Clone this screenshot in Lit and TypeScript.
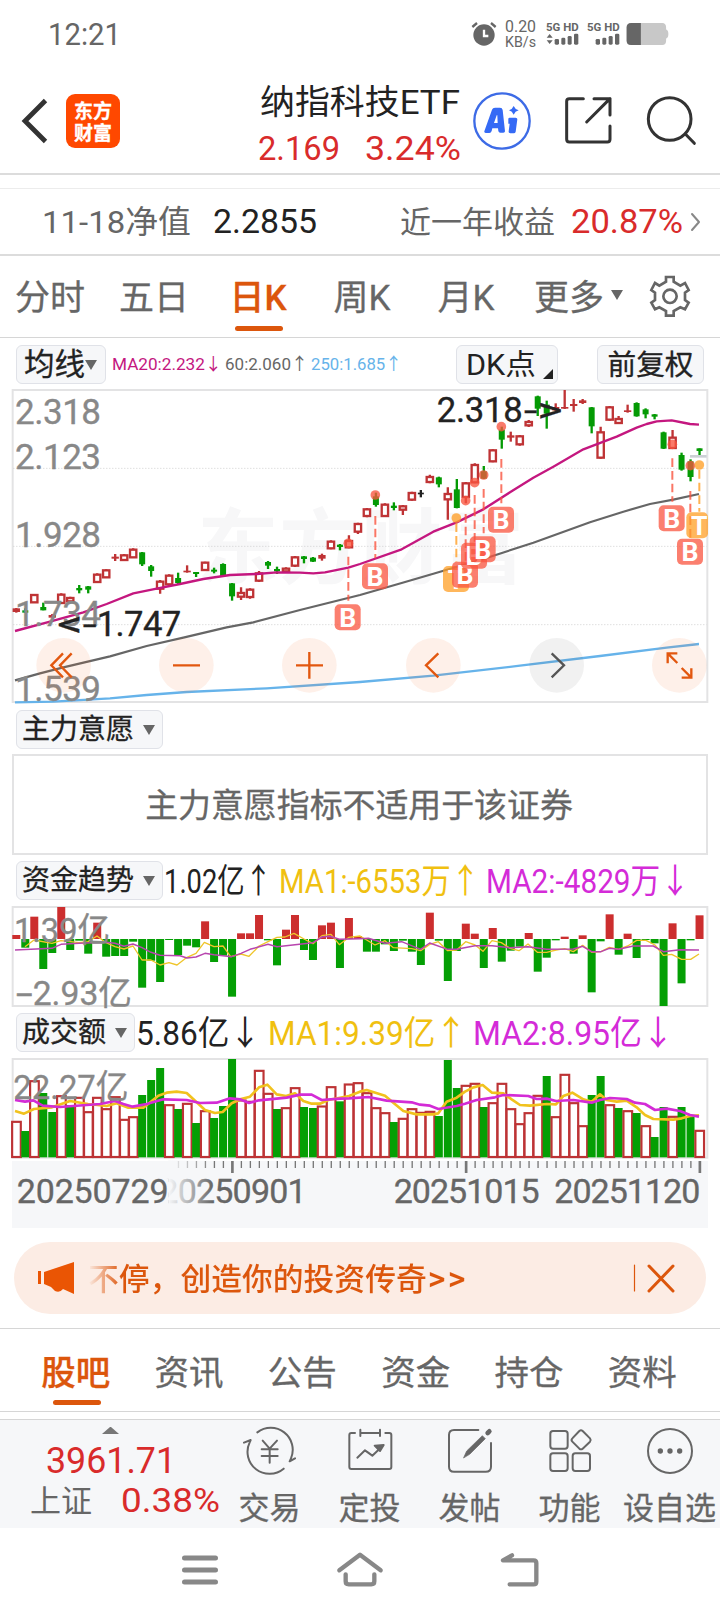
import { LitElement, html, svg, css } from "lit";
import { customElement } from "lit/decorators.js";

/** Text whose box is exactly its cap height, stretched to a given advance width. */
const fit = (text: string, width: number, size: number, cls = "") => {
  const h = Math.round(size * 0.71 * 10) / 10;
  return html`<svg class="fit ${cls}" width=${width} height=${h} viewBox="0 0 ${width} ${h}">
    <text x="0" y=${h} font-size=${size} textLength=${width} lengthAdjust="spacingAndGlyphs">${text}</text>
  </svg>`;
};

// Chart space uses three units per pixel; day i sits at X(i).
const X = (i: number) => 48.9 + 26.97 * i;

// kind, high, open/close top, open/close bottom, low
type Candle = [string, number, number, number, number];
const CANDLES: Candle[] = [
  ["r", 684, 686, 695, 698], ["g", 685, 692, 697, 699], ["r", 643, 644, 668, 668], ["g", 668, 682, 690, 691],
  ["r", 702, 706, 712, 714], ["r", 640, 643, 670, 671], ["r", 650, 653, 665, 668], ["g", 615, 625, 630, 640],
  ["g", 618, 620, 628, 640], ["r", 580, 583, 607, 608], ["r", 568, 570, 593, 594], ["r", 522, 531, 535, 543],
  ["r", 522, 525, 541, 543], ["r", 505, 508, 533, 534], ["g", 516, 518, 552, 558], ["g", 555, 560, 572, 590],
  ["r", 600, 604, 627, 641], ["r", 583, 586, 614, 620], ["g", 578, 595, 608, 612], ["r", 556, 573, 576, 578],
  ["g", 576, 577, 581, 591], ["r", 545, 547, 571, 572], ["g", 563, 570, 574, 580], ["g", 550, 553, 587, 588],
  ["g", 609, 611, 648, 662], ["r", 622, 638, 651, 660], ["r", 625, 628, 652, 656], ["r", 573, 579, 603, 606],
  ["g", 543, 547, 556, 567], ["g", 560, 568, 573, 582], ["r", 562, 565, 575, 577], ["r", 528, 531, 558, 561],
  ["g", 528, 530, 536, 550], ["g", 531, 534, 544, 546], ["r", 521, 526, 535, 542], ["r", 481, 484, 506, 508],
  ["g", 492, 495, 500, 511], ["r", 466, 482, 503, 505], ["r", 428, 431, 456, 462], ["r", 384, 387, 409, 412],
  ["g", 338, 350, 374, 380], ["r", 370, 373, 409, 410], ["g", 367, 378, 383, 391], ["r", 375, 378, 390, 405],
  ["r", 335, 338, 360, 362], ["k", 330, 339, 342, 352], ["r", 284, 290, 307, 310], ["g", 290, 293, 312, 322],
  ["r", 322, 341, 359, 419], ["g", 297, 329, 383, 385], ["r", 306, 309, 352, 370], ["r", 250, 254, 308, 310],
  ["g", 258, 275, 295, 297], ["r", 208, 210, 245, 247], ["g", 140, 150, 178, 206], ["r", 155, 167, 172, 185],
  ["r", 165, 168, 194, 197], ["r", 120, 125, 137, 141], ["g", 47, 50, 85, 108], ["g", 62, 75, 100, 146],
  ["r", 70, 82, 90, 92], ["r", 30, 82, 84, 87], ["r", 57, 73, 77, 95], ["r", 57, 62, 68, 72],
  ["g", 81, 83, 138, 160], ["r", 140, 156, 234, 236], ["r", 78, 81, 120, 122], ["r", 108, 116, 130, 132],
  ["r", 74, 92, 95, 98], ["g", 67, 70, 108, 110], ["g", 85, 89, 102, 115], ["g", 102, 104, 109, 118],
  ["g", 155, 158, 205, 207], ["r", 150, 172, 205, 207], ["g", 218, 226, 268, 272], ["g", 238, 245, 290, 304],
  ["g", 205, 206, 212, 225],
];

// End of each money-flow bar; red above the zero line at 117, green below it.
const FLOW = [105, 143, 50, 207, 159, 21, 150, 122, 161, 68, 170, 168, 168, 125, 263, 182, 246, 120, 165, 137, 142,
  64, 186, 167, 290, 100, 100, 45, 121, 196, 89, 45, 150, 180, 76, 68, 204, 54, 108, 155, 155, 133, 153, 122, 155,
  195, 38, 122, 243, 153, 71, 101, 204, 84, 185, 152, 140, 99, 215, 173, 121, 110, 161, 106, 277, 124, 43, 164, 101,
  174, 120, 130, 318, 70, 250, 121, 46];

const VOLUME = ("r664 g693 r542 g579 g636 r587 g615 r592 r635 r592 r626 r590 r658 r650 g585 g540 g504 r614 g627 r610 g669 " +
  "r632 g654 g618 g477 r600 r604 r511 r580 g627 r623 r563 g621 g624 r618 r560 g604 r552 r548 r578 r623 r638 g666 r655 " +
  "r626 r637 r634 g648 g480 g564 r556 r550 g621 r608 r550 r626 r671 r638 r586 g528 r650 r523 r608 r677 g585 g528 r614 " +
  "g624 r632 g639 r677 g711 g621 r649 g621 g650 r691").split(" ");

const MA20 = "45,753 150,725 250,697 320,672 400,640 470,626 540,612 610,597 690,585 770,582 830,577 900,578 940,580 975,577 1045,563 1080,552 1205,508 1300,455 1370,427 1450,388 1530,337 1600,293 1660,260 1750,208 1850,170 1910,143 1940,132 1970,124 2015,121 2055,129 2070,132 2097,134";
const MA60 = "45,901 120,880 190,862 330,829 440,798 550,773 680,742 760,727 900,690 1080,645 1205,609 1300,581 1450,537 1600,488 1770,427 1870,395 1950,372 2020,359 2097,342";
const MA250 = "45,967 160,965 330,955 440,945 560,936 800,925 1080,906 1300,887 1560,857 1800,828 2000,803 2097,792";
const FLOW_MA1 = "75,140 102,120 156,130 183,122 237,128 264,125 291,108 318,128 345,140 372,147 399,138 426,180 453,180 480,195 507,188 531,195 561,172 588,160 613,127 642,140 669,138 692,170 723,162 747,169 777,138 804,125 831,112 855,111 882,100 912,117 939,131 966,107 993,103 1018,134 1047,112 1080,108 1125,135 1155,122 1180,143 1235,146 1262,152 1289,133 1315,125 1343,152 1370,150 1397,125 1425,135 1449,154 1476,122 1504,128 1530,145 1557,152 1584,132 1612,157 1640,157 1668,150 1694,146 1720,155 1748,136 1775,157 1803,155 1828,142 1856,148 1883,138 1910,121 1938,121 1965,135 1990,166 2015,163 2045,178 2072,178 2097,162";
const FLOW_MA2 = "45,150 156,145 183,133 237,130 318,127 345,130 372,139 399,132 426,143 453,157 480,166 540,167 561,174 588,171 615,160 642,164 695,170 723,160 750,148 804,133 831,140 858,137 939,128 966,111 990,109 1018,118 1080,116 1105,115 1155,130 1205,125 1262,148 1289,129 1343,148 1370,148 1425,137 1476,137 1530,143 1584,140 1640,148 1720,147 1748,139 1775,155 1803,155 1828,145 1856,148 1900,138 1960,138 1990,155 2040,149 2097,150";
const VOL_MA1 = "45,633 72,641 102,627 156,622 210,603 264,612 320,618 350,610 385,623 430,623 475,587 500,578 530,575 560,579 590,607 615,630 645,639 668,636 695,610 723,597 750,590 777,562 802,554 830,583 858,588 885,580 910,603 935,611 960,611 985,600 1047,588 1080,575 1100,570 1155,587 1180,608 1210,633 1250,643 1300,643 1315,640 1340,605 1370,593 1395,575 1420,562 1448,555 1476,578 1510,580 1535,598 1560,615 1590,617 1640,612 1668,613 1690,588 1717,578 1750,598 1775,605 1800,583 1820,600 1850,605 1880,602 1910,622 1935,645 1960,657 2020,659 2045,655 2070,648 2097,646";
const VOL_MA2 = "45,600 75,605 100,601 128,617 180,621 300,612 345,603 370,612 398,620 440,612 490,598 560,600 600,609 650,608 690,595 720,598 747,609 777,601 860,593 900,584 935,584 965,600 1020,596 1047,595 1105,591 1160,602 1235,607 1260,614 1290,617 1315,627 1370,618 1395,611 1430,600 1485,592 1510,585 1585,588 1610,597 1640,596 1668,603 1720,600 1775,608 1800,600 1830,594 1880,597 1905,608 1935,612 1965,630 2000,626 2040,633 2070,645 2097,650";

// letter, badge centre x/y, dot y, dash start, dash end, dash x
type Mark = [string, number, number, number, number, number, number];
const MARKS: Mark[] = [
  ["B", 1043, 712, 490, 530, 662, 1045], ["B", 1125, 589, 345, 408, 535, 1126], ["T", 1368, 597, 414, 430, 545, 1369],
  ["B", 1395, 584, 362, 402, 545, 1397], ["B", 1422, 527, 308, 345, 488, 1424], ["B", 1448, 508, 285, 327, 460, 1451],
  ["B", 1503, 419, 140, 237, 370, 1504], ["B", 2015, 415, 193, 235, 365, 2017], ["B", 2070, 515, 257, 333, 475, 2071],
  ["T", 2098, 436, 255, 270, 395, 2098],
];

const FONT = css`
  :host { display: block; }
  svg { display: block; overflow: visible; flex: none; }
  text { font-family: Roboto, "Noto Sans CJK SC", sans-serif; white-space: pre; }
  .frame { fill: none; stroke: #e3e3e4; stroke-width: 6; }
  .axis { fill: #888; stroke: #888; stroke-width: 1; }
  .line { fill: none; stroke-linejoin: round; }
`;

@customElement("price-chart")
class PriceChart extends LitElement {
  static styles = [FONT, css`
    .grid { stroke: #cfcfcf; stroke-width: 3; stroke-dasharray: 3 6; }
    .mark { font-weight: 700; fill: #fff; font-size: 80px; text-anchor: middle; }
    .wm { font-weight: 700; fill: #f7f7f8; font-size: 244px; }
    .note { fill: #222; stroke: #222; stroke-width: 1; font-size: 104px; }
    .ctl { fill: none; stroke: #e2570f; stroke-width: 7; }
  `];

  private candle([k, hi, top, bot, lo]: Candle, i: number) {
    const x = X(i), c = k === "r" ? "#bf3335" : k === "g" ? "#049a04" : "#222";
    const tall = bot - top;
    if (k === "r" && tall > 9) {
      return svg`<path d="M${x} ${hi}V${top}M${x} ${bot}V${lo}" stroke=${c} stroke-width="7"/>
        <rect x=${x - 9.5} y=${top + 1} width="19" height=${tall - 2} fill="#fff" stroke=${c} stroke-width="7"/>`;
    }
    return svg`<path d="M${x} ${hi}V${lo}" stroke=${c} stroke-width="7"/>
      <rect x=${x - (k === "r" ? 11 : 9)} y=${top - 1} width=${k === "r" ? 22 : 18} height=${Math.max(5, tall + 2)} fill=${c}/>`;
  }

  private mark([t, bx, by, dy, d1, d2, x]: Mark) {
    const c = t === "B" ? "#f9543f" : "#ff9f26";
    return svg`<circle cx=${x} cy=${dy} r="14.5" fill=${c} opacity=".78"/>
      <path d="M${x} ${d1}V${d2}" stroke=${c} stroke-width="6" stroke-dasharray="26 12" opacity=".8"/>
      <rect x=${bx - 39} y=${by - 39} width=${Math.min(78, 2124 - bx + 39)} height="78" rx="15" fill=${c} opacity=".75"/>
      <text class="mark" x=${bx} y=${by + 29}>${t}</text>`;
  }

  render() {
    const warm = "rgba(245,110,40,.1)";
    return html`<svg width="720" height="318" viewBox="0 21 2160 954">
      <text class="wm" x="592" y="592" textLength="980">东方财富</text>
      <rect class="frame" x="38" y="30" width="2084" height="936"/>
      ${[265, 499, 734].map((y) => svg`<path class="grid" d="M40 ${y}H2120"/>`)}
      ${CANDLES.map((c, i) => this.candle(c, i))}
      <path d="M2070 229H2120" stroke="#ccd0d5" stroke-width="8"/>
      <polyline class="line" points=${MA250} stroke="#66b3ea" stroke-width="7"/>
      <polyline class="line" points=${MA60} stroke="#666" stroke-width="6.5"/>
      <polyline class="line" points=${MA20} stroke="#c4177f" stroke-width="7"/>
      ${[["2.318", 133], ["2.123", 268], ["1.928", 502], ["1.734", 738], ["1.539", 962]].map(
        ([t, y]) => svg`<text class="axis" x="45" y=${y} font-size="105" textLength="258">${t}</text>`)}
      <text class="note" x="172" y="768" textLength="118" lengthAdjust="spacingAndGlyphs">&lt;-</text>
      <text class="note" x="290" y="768" textLength="254">1.747</text>
      <text class="note" x="1310" y="127" textLength="258">2.318</text>
      <text class="note" x="1572" y="127" textLength="116" lengthAdjust="spacingAndGlyphs">-&gt;</text>
      ${MARKS.map((m) => this.mark(m))}
      ${[191, 559, 928, 1300, 1670, 2038].map((x) =>
        svg`<circle cx=${x} cy="856" r="82" fill=${x === 1670 ? "rgba(100,100,100,.09)" : warm}/>`)}
      <path class="ctl" d="M189 820L154 856L189 892M215 820L180 856L215 892"/>
      <path class="ctl" d="M519 856H600M888 856H969M928 816V896M1315 820L1278 856L1315 892"/>
      <path class="ctl" d="M1655 820L1692 856L1655 892" style="stroke:#555"/>
      <path class="ctl" d="M2032 820H2003V850M2003 820L2032 849M2074 865V893H2045M2074 893L2045 864"/>
    </svg>`;
  }
}

@customElement("flow-chart")
class FlowChart extends LitElement {
  static styles = FONT;
  render() {
    return html`<svg width="720" height="105" viewBox="0 12 2160 315">
      <rect class="frame" x="38" y="21" width="2084" height="297"/>
      ${FLOW.map((y, i) => svg`<rect x=${X(i) - 12} width="24" y=${Math.min(y, 117)} height=${Math.abs(y - 117)}
        fill=${y < 117 ? "#cc2e2e" : "#049f04"}/>`)}
      <polyline class="line" points=${FLOW_MA1} stroke="#efc52a" stroke-width="4"/>
      <polyline class="line" points=${FLOW_MA2} stroke="#b845ae" stroke-width="4.5"/>
      <text class="axis" x="42" y="127" font-size="102" textLength="288" lengthAdjust="spacingAndGlyphs">1.39亿</text>
      <text class="axis" x="48" y="316" font-size="102" textLength="50" lengthAdjust="spacingAndGlyphs">-</text>
      <text class="axis" x="98" y="316" font-size="102" textLength="298" lengthAdjust="spacingAndGlyphs">2.93亿</text>
    </svg>`;
  }
}

@customElement("volume-chart")
class VolumeChart extends LitElement {
  static styles = [FONT, css`
    .date { fill: #666; stroke: #666; stroke-width: 1; font-size: 102px; }
    .tick { stroke: #777; stroke-width: 4; }
    .major { stroke-width: 8; }
  `];
  render() {
    const dates: [string, number, number][] = [["20250901", 478, 442], ["20250729", 50, 456], ["20251015", 1181, 438], ["20251120", 1663, 438]];
    const date = ([t, x, w]: [string, number, number]) => svg`<text class="date" x=${x} y="910" textLength=${w}>${t}</text>`;
    return html`<svg width="720" height="172" viewBox="0 468 2160 516">
      <defs><linearGradient id="fade"><stop offset="0" stop-color="#f6f7f9"/><stop offset=".15" stop-color="#f6f7f9" stop-opacity=".85"/>
        <stop offset="1" stop-color="#f6f7f9" stop-opacity="0"/></linearGradient></defs>
      <rect x="36" y="783" width="2088" height="201" fill="#f6f7f9"/>
      <rect class="frame" x="38" y="477" width="2084" height="296"/>
      ${VOLUME.map((v, i) => {
        const y = Number(v.slice(1));
        return v[0] === "g"
          ? svg`<rect x=${X(i) - 12} y=${y} width="24" height=${772 - y} fill="#049f04"/>`
          : svg`<rect x=${X(i) - 12.5} y=${y + 1.5} width="26" height=${769.5 - y} fill="#fff" stroke="#bd3335" stroke-width="6.5"/>`;
      })}
      <polyline class="line" points=${VOL_MA1} stroke="#f1c21e" stroke-width="8"/>
      <polyline class="line" points=${VOL_MA2} stroke="#d32bd6" stroke-width="8"/>
      <text class="axis" x="40" y="598" font-size="102" textLength="346" lengthAdjust="spacingAndGlyphs">22.27亿</text>
      ${Array.from({ length: 59 }, (_, k) => k + 18).map((i) => {
        const big = i === 24 || i === 50 || i === 76;
        return svg`<path class="tick ${big ? "major" : ""}" d="M${X(i) + 1} 783V${big ? 819 : 804}"/>`;
      })}
      ${dates.slice(0, 1).map(date)}
      <rect x="440" y="835" width="66" height="100" fill="#f6f7f9"/>
      <rect x="505" y="781" width="135" height="160" fill="url(#fade)"/>
      ${dates.slice(1).map(date)}
    </svg>`;
  }
}

@customElement("app-root")
class AppRoot extends LitElement {
  static styles = css`
    :host { display: block; width: 720px; height: 1612px; background: #fff; overflow: hidden; color: #666;
      font-family: Roboto, "Noto Sans CJK SC", sans-serif; -webkit-text-stroke: .3px currentColor; }
    * { box-sizing: border-box; }
    svg { display: block; overflow: visible; flex: none; }
    .fit text { font-family: Roboto, "Noto Sans CJK SC", sans-serif; white-space: pre; fill: currentColor; }
    .small text { -webkit-text-stroke: 0; }
    .row { display: flex; align-items: center; }
    .red { color: #d92b2b; -webkit-text-stroke: .6px currentColor; }
    .dark { color: #222; }
    .orange { color: #dc560c; }
    .yellow { color: #f0c010; }
    .magenta { color: #d42bd8; }
    .stroke { fill: none; stroke: currentColor; stroke-linecap: round; stroke-linejoin: round; }
    .stroke.dark { color: #333; }

    .status { height: 68px; padding-left: 48px; }
    .status .right { margin-left: 351px; gap: 9px; }
    .net { display: grid; gap: 4px; margin-right: 1px; }
    .head { height: 107px; padding-left: 22px; border-bottom: 2px solid #dcdcdc; }
    .logo { width: 54px; height: 54px; margin: 0 0 0 19px; border-radius: 9px; background: #ff4800; color: #fff;
      display: grid; place-content: center; font: 700 19px/22px "Noto Sans CJK SC", sans-serif; text-align: center; }
    .names { margin-left: 140px; width: 205px; display: grid; gap: 23px; padding-top: 9px; }
    .quote { display: flex; justify-content: space-between; margin-left: -2px; padding-right: 4px; }
    .nav { height: 68px; margin-top: 13px; border-top: 1px solid #ececec; border-bottom: 2px solid #dcdcdc; padding-left: 42px; }
    .tabs { height: 82px; border-bottom: 1px solid #d6d6d6; font-size: 35px; }
    .tab { width: 104px; height: 100%; display: flex; align-items: center; justify-content: center; line-height: 40px; padding-top: 3px; position: relative; }
    .tabs .tab { padding-right: 4px; padding-top: 4px; }
    .on { color: #dc560c; font-weight: 500; }
    .on::after { content: ""; position: absolute; bottom: 6px; left: calc(50% - 24px); width: 48px; height: 5px; border-radius: 3px; background: #dc560c; }
    .tabs .on::after { left: 27px; }
    .more { margin: 4px 7px 0 14px; line-height: 40px; }
    .tools { height: 49px; padding-left: 16px; padding-top: 3px; }
    .chip { height: 39px; border: 1.5px solid #e0e2e8; border-radius: 6px; background: #f6f7f9; color: #222;
      display: flex; align-items: center; padding: 1px 6px 0; font-size: 28px; line-height: 36px; }
    .tri { width: 0; height: 0; border: 6px solid transparent; border-top: 10px solid #666; border-bottom: 0; }
    .corner { width: 0; height: 0; border-left: 10px solid transparent; border-bottom: 10px solid #222; align-self: flex-end; margin-bottom: 4px; }
    .ind { height: 47px; padding-left: 16px; }
    .ind .fit { position: relative; top: 1px; }
    .empty { height: 101px; margin: 0 12px; border: 2px solid #e3e3e4; font-size: 32.9px; display: grid; place-items: center; padding: 0 2px 4px 0; }
    .banner { height: 72px; margin: 14px 14px 0; border-radius: 36px; background: #fcece4; padding-left: 24px; font-size: 30.8px; }
    .banner .msg { margin-left: 13px; width: 532px; padding-top: 2px; color: transparent; -webkit-text-stroke: 0; font-weight: 500; background: linear-gradient(90deg, #fcece4, #dc560c 34px); background-clip: text; -webkit-background-clip: text; white-space: nowrap; line-height: 44px; }
    .banner .gt { font-size: 34px; letter-spacing: 2.4px; margin-left: 1px; }
    .subtabs { height: 84px; margin-top: 14px; border-top: 1.5px solid #d6d6d6; border-bottom: 1.5px solid #d6d6d6; padding: 0 20px; display: grid; grid-template-columns: repeat(6, 1fr); font-size: 34.5px; }
    .subtabs .tab { width: auto; padding-top: 5px; padding-right: 2px; }
    .dock { height: 109px; margin-top: 7px; border-top: 1.5px solid #d6d6d6; background: #f6f7f9; display: grid; grid-template-columns: 220px repeat(5, 100px); }
    .cell { display: flex; flex-direction: column; align-items: center; padding-top: 4px; font-size: 31px; white-space: nowrap; }
    .cell span { line-height: 40px; margin-top: 11px; margin-left: -1px; }
    .index { padding: 7px 0 0 30px; }
    .up { margin-left: 72px; width: 17px; border: 8px solid transparent; border-top: 0; border-bottom: 7px solid #777; height: 0; }
    .sys { height: 84px; color: #888; }
  `;

  private signal(bars: boolean) {
    return html`<svg class="small" width="32" height="23" viewBox="0 0 96 69" fill="currentColor">
      <text x="0" y="24" font-family="Roboto" font-weight="700" font-size="31" textLength="98" lengthAdjust="spacingAndGlyphs">5G HD</text>
      ${bars ? svg`<path d="M2 44L11 33L20 44ZM2 52L11 63L20 52Z"/>` : ""}
      <rect x="26" y="48" width="13" height="17" rx="4"/><rect x="46" y="44" width="12" height="21" rx="4"/>
      <rect x="65" y="39" width="12" height="26" rx="4"/><rect x="84" y="32" width="13" height="33" rx="4"/></svg>`;
  }

  render() {
    return html`
      <div class="status row">
        ${fit("12:21", 73, 31)}
        <div class="right row">
          <svg width="24" height="24" viewBox="39 37 72 72"><circle cx="75" cy="76" r="32" fill="currentColor"/>
            <path d="M40 52L54 40M96 40L110 52" stroke="currentColor" stroke-width="7"/>
            <path d="M75 60V79H88" fill="none" stroke="#fff" stroke-width="7"/></svg>
          <div class="net">${fit("0.20", 31, 16, "small")}${fit("KB/s", 31, 14, "small")}</div>
          ${this.signal(true)}${this.signal(false)}
          <svg width="43" height="22" viewBox="508 38 129 68" style="margin-left:-2px"><path d="M522 38H618Q630 38 630 52V58Q637 60 637 72T630 86V92Q630 106 618 106H522Q508 106 508 92V52Q508 38 522 38Z" fill="#c8c8c8"/>
            <path d="M552 38H522Q508 38 508 52V92Q508 106 522 106H552Z" fill="#666"/></svg>
        </div>
      </div>

      <div class="head row">
        <svg class="stroke dark" width="25" height="44" viewBox="0 0 25 44" stroke-width="4.8" style="stroke-linecap:butt;stroke-linejoin:miter"><path d="M23.5 1.5L3 22L23.5 42.5"/></svg>
        <div class="logo"><span>东方</span><span>财富</span></div>
        <div class="names">
          ${fit("纳指科技ETF", 200, 34, "dark")}
          <div class="quote">${fit("2.169", 82, 33, "red")}${fit("3.24%", 96, 33, "red")}</div>
        </div>
        <svg width="60" height="60" viewBox="39 242 180 180" style="margin-left:7px"><circle cx="129" cy="332" r="83" fill="none" stroke="#3d6be6" stroke-width="7"/>
          <path fill="#356af5" fill-rule="evenodd" d="M76 363L99 298Q101 292 108 292H123Q130 292 131 299L138 363Q138 367 133 367H124Q119 367 118 362L117 354H100L98 362Q96 368 91 368H80Q75 368 76 363ZM105 338H116L115 315H113ZM152 322H170Q175 322 175 327L170 364Q169 369 164 369H154Q148 369 149 363L152 340H148V326Q148 322 152 322ZM164 287Q168 297 179 300Q168 303 164 313Q160 303 150 300Q160 297 164 287Z"/></svg>
        <svg class="stroke dark" width="48" height="48" viewBox="317 262 144 144" stroke-width="9" style="margin-left:33px"><path d="M372 267H330Q322 267 322 275V389Q322 397 330 397H444Q452 397 452 389V349M404 267H452V316M452 267L382 337"/></svg>
        <svg class="stroke dark" width="50" height="50" viewBox="564 256 150 150" stroke-width="9" style="margin-left:34px"><circle cx="632" cy="325" r="64"/><path d="M679 370L706 398"/></svg>
      </div>

      <div class="nav row">
        ${fit("11-18净值", 149, 32)}
        <span style="width:22px"></span>${fit("2.2855", 104, 33, "dark")}
        <span style="width:83px"></span>${fit("近一年收益", 155, 31)}
        <span style="width:16px"></span>${fit("20.87%", 112, 33, "red")}
        <svg class="stroke" width="9" height="18" viewBox="0 0 9 18" stroke-width="2" style="margin-left:8px;color:#888"><path d="M1 1L8 9L1 17"/></svg>
      </div>

      <div class="tabs row">
        <div class="tab">分时</div><div class="tab">五日</div><div class="tab on">日K</div><div class="tab">周K</div><div class="tab">月K</div>
        <span class="more">更多</span><div class="tri" style="margin-top:-4px"></div>
        <svg class="stroke" width="42" height="42" viewBox="630 74 126 126" stroke-width="8" style="margin:-2px 0 0 26px;stroke-linecap:butt;stroke-linejoin:miter">
          <path d="M681 80H704V94L724 106L738 98L749 119L738 127V149L749 157L738 177L724 171L704 182V196H681V182L661 171L648 177L637 157L648 149V127L637 119L648 98L661 106L681 94Z"/><circle cx="693" cy="138" r="20"/></svg>
      </div>

      <div class="tools row">
        <div class="chip" style="width:90px;font-size:30.5px;padding:2px 7px 0">均线<div class="tri"></div></div>
        <span style="width:6px"></span>
        <span style="color:#c4177f">${fit("MA20:2.232↓", 110, 17)}</span><span style="width:3px"></span>
        ${fit("60:2.060↑", 83, 17)}<span style="width:3px"></span>
        <span style="color:#66b3ea">${fit("250:1.685↑", 91, 17)}</span>
        <div class="chip" style="width:102px;margin-left:54px;padding:0 4px 0 9px;justify-content:space-between">${fit("DK点", 70, 29)}<div class="corner"></div></div>
        <div class="chip" style="width:107px;margin-left:39px;padding:1px 0 0;justify-content:center;font-size:28.7px">前复权</div>
      </div>

      <price-chart></price-chart>
      <div class="ind row" style="height:49px">
        <div class="chip" style="width:147px;padding-left:5px">主力意愿<div class="tri" style="margin-left:9px"></div></div>
      </div>
      <div class="empty">主力意愿指标不适用于该证券</div>
      <div class="ind row" style="height:49px;padding-top:2px">
        <div class="chip" style="width:147px;padding-left:5px">资金趋势<div class="tri" style="margin-left:9px"></div></div>
        <span style="width:1px"></span>${fit("1.02亿↑", 108, 34, "dark")}<span style="width:7px"></span>
        ${fit("MA1:-6553万↑", 201, 34, "yellow")}<span style="width:6px"></span>
        ${fit("MA2:-4829万↓", 204, 34, "magenta")}
      </div>
      <flow-chart></flow-chart>
      <div class="ind row">
        <div class="chip" style="width:119px;padding-left:5px">成交额<div class="tri" style="margin-left:9px"></div></div>
        <span style="width:1px"></span>${fit("5.86亿↓", 125, 34, "dark")}<span style="width:7px"></span>
        ${fit("MA1:9.39亿↑", 199, 34, "yellow")}<span style="width:6px"></span>
        ${fit("MA2:8.95亿↓", 201, 34, "magenta")}
      </div>
      <volume-chart></volume-chart>

      <div class="banner row">
        <svg width="37" height="32" viewBox="0 0 37 32" fill="#ea5504"><path d="M0 9H3V22H0ZM6 10L36 0V32L25 27Q22 31 17 29L13 25L6 22Z"/></svg>
        <span class="msg">不停，创造你的投资传奇<span class="gt">&gt;&gt;</span></span>
        <svg class="stroke orange" width="42" height="30" viewBox="0 0 42 30" stroke-width="3" style="margin-left:13px"><path d="M1.5 2V28" stroke-width="1.2"/><path d="M16 3L40 28M40 3L16 28"/></svg>
      </div>

      <div class="subtabs">
        ${["股吧", "资讯", "公告", "资金", "持仓", "资料"].map((t, i) => html`<div class="tab ${i ? "" : "on"}">${t}</div>`)}
      </div>

      <div class="dock">
        <div class="index">
          <div class="up"></div>
          <div style="margin:13px 0 0 16px">${fit("3961.71", 130, 37, "red")}</div>
          <div class="row" style="margin-top:16px">${fit("上证", 62, 31)}<span style="width:30px"></span>${fit("0.38%", 99, 33, "red")}</div>
        </div>
        <div class="cell"><svg class="stroke" width="100" height="54" viewBox="-30 27 300 162" stroke-width="6">
          <path d="M82 52A66 66 0 0 1 183 130L179 139L195 130M42 83L62 75L59 82A66 66 0 0 0 161 161"/><path d="M98 77L119 101L141 77M95 103H143M95 123H143M119 103V143"/></svg><span>交易</span></div>
        <div class="cell"><svg class="stroke" width="100" height="54" viewBox="270 27 300 162" stroke-width="6">
          <path d="M375 54H364Q358 54 358 60V156Q358 162 364 162H478Q484 162 484 156V60Q484 54 478 54H466M391 44V63M450 44V63M391 54H450M382 128L405 106L427 122L452 98"/><path d="M434 92L461 90L450 108Z" fill="currentColor"/></svg><span>定投</span></div>
        <div class="cell"><svg class="stroke" width="100" height="54" viewBox="570 27 300 162" stroke-width="6">
          <path d="M745 45H672Q657 45 657 60V155Q657 170 672 170H767Q783 170 783 155V84"/><path d="M701 128L710 108L757 62L766 71L720 117Z" fill="currentColor" stroke-width="2"/><path d="M773 54L778 49" stroke-width="14"/></svg><span>发帖</span></div>
        <div class="cell"><svg class="stroke" width="100" height="54" viewBox="870 27 300 162" stroke-width="6">
          <rect x="961" y="48" width="52" height="53" rx="8"/><rect x="961" y="115" width="52" height="53" rx="8"/><rect x="1028" y="115" width="52" height="53" rx="8"/><path d="M1048 48Q1053 44 1058 48L1080 70Q1084 75 1080 80L1058 101Q1053 105 1048 101L1027 80Q1022 75 1027 70Z"/></svg><span>功能</span></div>
        <div class="cell"><svg class="stroke" width="100" height="54" viewBox="1170 27 300 162" stroke-width="6">
          <circle cx="1320" cy="108" r="66"/><g fill="currentColor" stroke="none"><circle cx="1291" cy="108" r="8"/><circle cx="1320" cy="108" r="8"/><circle cx="1349" cy="108" r="8"/></g></svg><span>设自选</span></div>
      </div>

      <div class="sys row">
        <svg class="stroke" width="36" height="34" viewBox="0 0 36 34" stroke-width="5" style="margin-left:182px"><path d="M2.5 5H33.5M2.5 17H33.5M2.5 29H33.5"/></svg>
        <svg class="stroke" width="48" height="38" viewBox="318 401 144 114" stroke-width="13" style="margin-left:118px"><path d="M328 459L390 412L452 459M347 471V492Q347 501 356 501H424Q433 501 433 492V471"/></svg>
        <svg class="stroke" width="42" height="38" viewBox="808 401 126 114" stroke-width="13" style="margin-left:115px"><path d="M847 414L820 429H912Q920 429 920 437V493Q920 501 912 501H840"/></svg>
      </div>
    `;
  }
}
